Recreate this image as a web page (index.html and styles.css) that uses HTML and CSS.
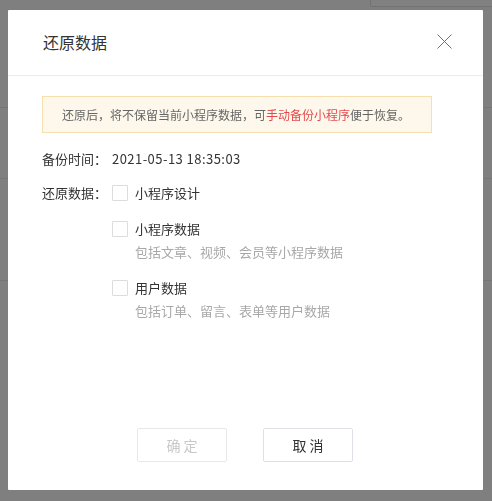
FILE: index.html
```html
<!DOCTYPE html>
<html lang="zh-CN">
<head>
<meta charset="utf-8">
<title>还原数据</title>
<link rel="stylesheet" href="styles.css">
</head>
<body>
<div class="backdrop">
  <div class="bg-box"></div>
</div>
<div class="mask">
  <div class="modal">
    <div class="modal-header">
      <h2 class="modal-title">还原数据</h2>
      <button class="close" aria-label="关闭">
        <svg width="15" height="15" viewBox="0 0 15 15"><path d="M0.5 0.5 L14.5 14.5 M14.5 0.5 L0.5 14.5" stroke="#707070" stroke-width="1" fill="none"/></svg>
      </button>
    </div>
    <div class="modal-body">
      <div class="alert">还原后，将不保留当前小程序数据，可<span class="link">手动备份小程序</span>便于恢复。</div>
      <div class="row">
        <div class="row-label">备份时间：</div>
        <div class="row-value">2021-05-13 18:35:03</div>
      </div>
      <div class="row row-options">
        <div class="row-label">还原数据：</div>
        <div class="options">
          <label class="option">
            <span class="box"></span>
            <span class="option-text">
              <span class="option-title">小程序设计</span>
            </span>
          </label>
          <label class="option">
            <span class="box"></span>
            <span class="option-text">
              <span class="option-title">小程序数据</span>
              <span class="option-desc">包括文章、视频、会员等小程序数据</span>
            </span>
          </label>
          <label class="option">
            <span class="box"></span>
            <span class="option-text">
              <span class="option-title">用户数据</span>
              <span class="option-desc">包括订单、留言、表单等用户数据</span>
            </span>
          </label>
        </div>
      </div>
    </div>
    <div class="modal-footer">
      <button class="btn btn-disabled">确 定</button>
      <button class="btn">取 消</button>
    </div>
  </div>
</div>
</body>
</html>
```
FILE: styles.css
```css
* { box-sizing: border-box; }
html, body { margin: 0; padding: 0; }
body {
  width: 492px;
  height: 501px;
  overflow: hidden;
  font-family: "Noto Sans CJK SC", "Noto Sans", sans-serif;
  background-color: #7f7f7f;
  background-image:
    linear-gradient(to bottom, transparent 107px, #767676 107px, #767676 108px, transparent 108px),
    linear-gradient(to bottom, transparent 178px, #767676 178px, #767676 179px, transparent 179px),
    linear-gradient(to bottom, transparent 280px, #767676 280px, #767676 281px, transparent 281px);
}
.backdrop {
  position: relative;
  height: 8px;
}
.bg-box {
  position: absolute;
  left: 370px;
  top: -4px;
  width: 130px;
  height: 11px;
  border: 1px solid #737373;
  border-radius: 2px;
  background: #818181;
}
.mask {
  position: fixed;
  inset: 0;
  padding: 10px 9px 11px 8px;
  display: flex;
}
.modal {
  width: 475px;
  height: 480px;
  background: #fff;
  border-radius: 1px;
  display: flex;
  flex-direction: column;
}
.modal-header {
  height: 66px;
  border-bottom: 1px solid #ebebeb;
  display: flex;
  align-items: center;
  justify-content: space-between;
  padding: 0 31px 2px 35px;
}
.modal-title {
  margin: 0;
  font-size: 16px;
  font-weight: normal;
  color: #333;
  line-height: 22px;
}
.close {
  border: 0;
  background: none;
  padding: 0;
  width: 15px;
  height: 15px;
  display: flex;
  cursor: pointer;
}
.modal-body {
  padding: 20px 0 0 34px;
}
.alert {
  width: 390px;
  height: 37px;
  background: #fdf8eb;
  border: 1px solid #f6e0ad;
  font-size: 12px;
  color: #666;
  line-height: 35px;
  padding-left: 19px;
  white-space: nowrap;
}
.link { color: #e6484e; }
.row {
  display: flex;
  margin-top: 16px;
  font-size: 13px;
  line-height: 20px;
  color: #333;
}
.row-options { margin-top: 14px; }
.row-label { width: 70px; flex: none; }
.row-value { color: #333; letter-spacing: 0.45px; }
.options {
  display: flex;
  flex-direction: column;
  gap: 16px;
}
.option {
  display: flex;
  align-items: flex-start;
  gap: 7px;
}
.box {
  width: 16px;
  height: 16px;
  margin-top: 2px;
  border: 1px solid #dcdcdc;
  border-radius: 1px;
  background: #fff;
  flex: none;
}
.option-text {
  display: flex;
  flex-direction: column;
  gap: 3px;
}
.option-title { color: #333; }
.option-desc { color: #a8a8a8; }
.modal-footer {
  margin-top: auto;
  padding: 0 1px 28px 0;
  display: flex;
  justify-content: center;
  gap: 36px;
}
.btn {
  width: 90px;
  height: 34px;
  border: 1px solid #dfe0e6;
  border-radius: 2px;
  background: #fff;
  font-family: inherit;
  font-size: 14px;
  color: #333;
  padding: 0;
}
.btn-disabled {
  color: #c8c8c8;
  border-color: #e8e8ec;
}
```
